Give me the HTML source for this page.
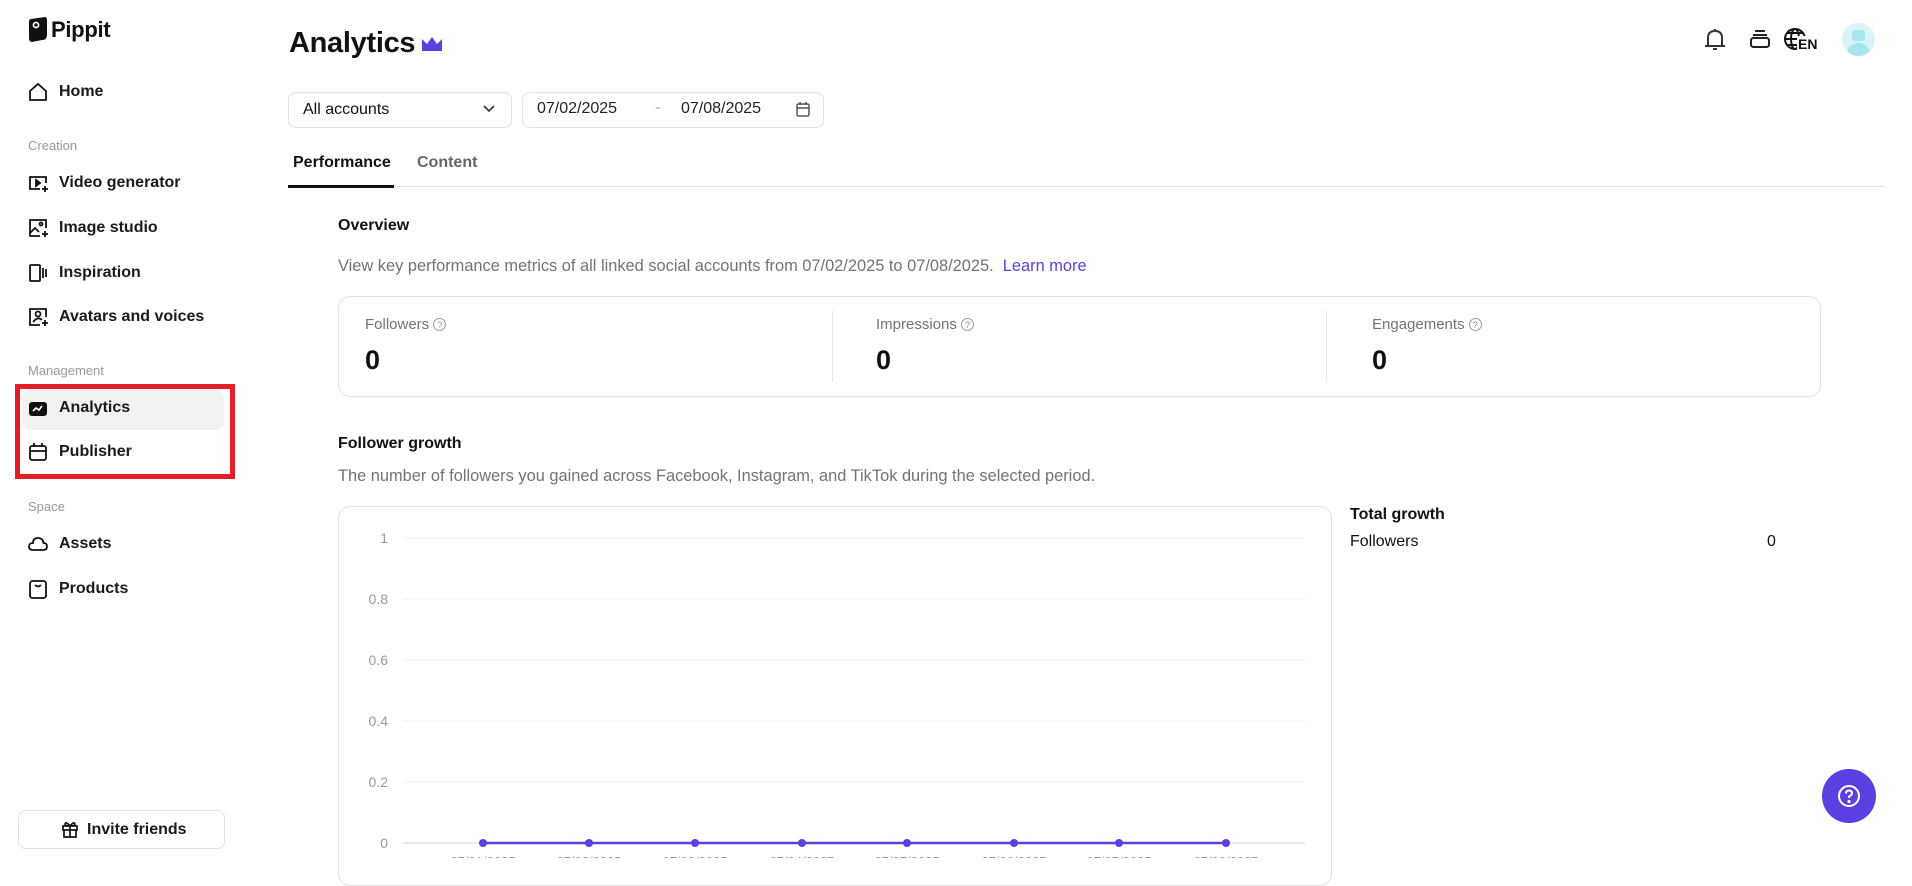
<!DOCTYPE html>
<html><head><meta charset="utf-8">
<style>
*{margin:0;padding:0;box-sizing:border-box}
body{width:1912px;height:858px;overflow:hidden;background:#fff;font-family:"Liberation Sans",Arial,sans-serif;color:#111;position:relative}
.a{position:absolute;white-space:nowrap}
.nav{font-size:16px;font-weight:bold;color:#1a1a1a}
.sec{font-size:13px;color:#999}
.ic{position:absolute;width:22px;height:22px}
.gray{color:#737373}
.q{border:1px solid #999;border-radius:50%;display:inline-block;width:13px;height:13px;line-height:12px;text-align:center;font-size:9px;color:#888;vertical-align:1px}
</style></head><body>
<!-- logo -->
<svg class="a" style="left:28px;top:17px" width="20" height="25" viewBox="0 0 20 25"><path d="M3 2 L17 0 Q19 0 19 3 L19 18 Q19 23 14 23 L4 25 Q1 25 1 21 L1 5 Q1 2 3 2Z" fill="#111"/><circle cx="8" cy="8" r="2.6" fill="none" stroke="#fff" stroke-width="1.6"/></svg>
<div class="a" style="left:51px;top:17px;font-size:22px;font-weight:bold;letter-spacing:-0.3px">Pippit</div>

<!-- nav -->
<svg class="ic" style="left:27px;top:81px" viewBox="0 0 22 22" fill="none" stroke="#111" stroke-width="1.8"><path d="M3 10 L11 3 L19 10 V19 H3Z"/></svg>
<div class="a nav" style="left:59px;top:83px">Home</div>
<div class="a sec" style="left:28px;top:138px">Creation</div>
<svg class="ic" style="left:27px;top:172px" viewBox="0 0 22 22" fill="none" stroke="#111" stroke-width="1.8"><path d="M19 11 V5 H3 V17 H13"/><path d="M9 8 L13 11 L9 14Z" fill="#111"/><path d="M18 14 V20 M15 17 H21"/></svg>
<div class="a nav" style="left:59px;top:174px">Video generator</div>
<svg class="ic" style="left:27px;top:217px" viewBox="0 0 22 22" fill="none" stroke="#111" stroke-width="1.8"><path d="M19 11 V3 H3 V19 H13"/><path d="M3 16 L8 11 L12 15"/><circle cx="14" cy="7" r="1.5"/><path d="M18 14 V20 M15 17 H21"/></svg>
<div class="a nav" style="left:59px;top:219px">Image studio</div>
<svg class="ic" style="left:27px;top:262px" viewBox="0 0 22 22" fill="none" stroke="#111" stroke-width="1.8"><rect x="3" y="3" width="10" height="16" rx="1"/><path d="M16 6 V16 M19 7 V15"/></svg>
<div class="a nav" style="left:59px;top:264px">Inspiration</div>
<svg class="ic" style="left:27px;top:306px" viewBox="0 0 22 22" fill="none" stroke="#111" stroke-width="1.8"><path d="M19 11 V3 H3 V19 H13"/><circle cx="11" cy="8" r="2.5"/><path d="M6 16 Q11 10 15 14"/><path d="M18 14 V20 M15 17 H21"/></svg>
<div class="a nav" style="left:59px;top:308px">Avatars and voices</div>
<div class="a sec" style="left:28px;top:363px">Management</div>
<div class="a" style="left:22px;top:390px;width:202px;height:40px;background:#f2f2f2;border-radius:8px"></div>
<svg class="ic" style="left:27px;top:398px" viewBox="0 0 22 22"><rect x="2" y="4" width="18" height="14" rx="3" fill="#111"/><path d="M6 13 L9 10 L12 12 L15 8" fill="none" stroke="#fff" stroke-width="1.6"/></svg>
<div class="a nav" style="left:59px;top:399px">Analytics</div>
<svg class="ic" style="left:27px;top:441px" viewBox="0 0 22 22" fill="none" stroke="#111" stroke-width="1.8"><rect x="3" y="5" width="16" height="14" rx="2"/><path d="M3 10 H19 M7 2 V6 M15 2 V6"/></svg>
<div class="a nav" style="left:59px;top:443px">Publisher</div>
<div class="a" style="left:15px;top:384px;width:220px;height:95px;border:5px solid #e41e26"></div>
<div class="a sec" style="left:28px;top:499px">Space</div>
<svg class="ic" style="left:27px;top:533px" viewBox="0 0 22 22" fill="none" stroke="#111" stroke-width="1.8"><path d="M6 17 H16 Q20 17 20 13.5 Q20 10 16.5 10 Q16 5 11 5 Q6 5 6 10 Q2 10 2 13.5 Q2 17 6 17Z"/></svg>
<div class="a nav" style="left:59px;top:535px">Assets</div>
<svg class="ic" style="left:27px;top:578px" viewBox="0 0 22 22" fill="none" stroke="#111" stroke-width="1.8"><rect x="3" y="3" width="16" height="17" rx="2.5"/><path d="M8 7 Q11 10 14 7"/></svg>
<div class="a nav" style="left:59px;top:580px">Products</div>
<div class="a" style="left:18px;top:810px;width:207px;height:39px;border:1px solid #e2e2e2;border-radius:8px"></div>
<svg class="a" style="left:61px;top:820px" width="18" height="19" viewBox="0 0 18 19" fill="none" stroke="#111" stroke-width="1.7"><rect x="2" y="6" width="14" height="4"/><path d="M3 10 V17 H15 V10 M9 6 V17 M9 6 Q5 1 4 4 Q4 6 9 6 Q14 6 14 4 Q13 1 9 6"/></svg>
<div class="a nav" style="left:87px;top:821px;font-size:16px">Invite friends</div>

<!-- header -->
<div class="a" style="left:289px;top:27px;font-size:29px;font-weight:bold;letter-spacing:-0.3px">Analytics</div>
<svg class="a" style="left:421px;top:36px" width="22" height="16" viewBox="0 0 22 16"><path d="M1 3 L6 8 L11 1 L16 8 L21 3 V15 H1Z" fill="#5b3fe0"/></svg>

<svg class="a" style="left:1703px;top:27px" width="24" height="26" viewBox="0 0 24 26" fill="none" stroke="#333" stroke-width="2"><path d="M5 19 V11 Q5 4 12 4 Q19 4 19 11 V19 M2 19 H22 M10 22 H14 M11 3 H13"/></svg>
<svg class="a" style="left:1749px;top:28px" width="22" height="22" viewBox="0 0 22 22" fill="none" stroke="#222" stroke-width="2"><path d="M6 3 H16 M4 7 H18"/><rect x="2" y="10" width="18" height="9" rx="2.5"/></svg>
<svg class="a" style="left:1783px;top:27px" width="36" height="27" viewBox="0 0 36 27" fill="none" stroke="#111" stroke-width="2"><circle cx="12" cy="12" r="10"/><ellipse cx="12" cy="12" rx="4" ry="10"/><path d="M2 12 H22 M4 6 H20 M4 18 H14"/></svg>
<div class="a" style="left:1797px;top:36px;font-size:14px;font-weight:bold;background:#fff;padding-left:1px;line-height:16px">EN</div>
<svg class="a" style="left:1842px;top:23px" width="33" height="33" viewBox="0 0 33 33"><circle cx="16.5" cy="16.5" r="16.5" fill="#d9f3f7"/><rect x="10" y="7" width="13" height="11" rx="3" fill="#a6e6f0"/><path d="M5 28 Q9 20 16.5 20 Q24 20 28 28 Q23 33 16.5 33 Q10 33 5 28Z" fill="#a6e6f0"/></svg>

<!-- filters -->
<div class="a" style="left:288px;top:92px;width:224px;height:36px;border:1px solid #e3e3e3;border-radius:8px"></div>
<div class="a" style="left:303px;top:101px;font-size:16px">All accounts</div>
<svg class="a" style="left:482px;top:104px" width="14" height="10" viewBox="0 0 14 10" fill="none" stroke="#333" stroke-width="1.6"><path d="M2 2 L7 7 L12 2"/></svg>
<div class="a" style="left:522px;top:92px;width:302px;height:36px;border:1px solid #e3e3e3;border-radius:8px"></div>
<div class="a" style="left:537px;top:100px;font-size:16px;color:#222">07/02/2025</div>
<div class="a" style="left:655px;top:99px;font-size:16px;color:#aaa">-</div>
<div class="a" style="left:681px;top:100px;font-size:16px;color:#222">07/08/2025</div>
<svg class="a" style="left:795px;top:101px" width="16" height="17" viewBox="0 0 16 17" fill="none" stroke="#555" stroke-width="1.5"><rect x="2" y="3" width="12" height="12" rx="1.5"/><path d="M2 7 H14 M5 1 V4 M11 1 V4"/></svg>

<!-- tabs -->
<div class="a" style="left:293px;top:154px;font-size:16px;font-weight:bold">Performance</div>
<div class="a" style="left:417px;top:154px;font-size:16px;font-weight:bold;color:#666">Content</div>
<div class="a" style="left:288px;top:186px;width:1597px;height:1px;background:#e3e3e3"></div>
<div class="a" style="left:288px;top:185px;width:106px;height:3px;background:#111"></div>

<!-- overview -->
<div class="a" style="left:338px;top:217px;font-size:16px;font-weight:bold">Overview</div>
<div class="a gray" style="left:338px;top:257px;font-size:16.4px">View key performance metrics of all linked social accounts from 07/02/2025 to 07/08/2025. &nbsp;<span style="color:#5b3fe0">Learn more</span></div>
<div class="a" style="left:338px;top:296px;width:1483px;height:101px;border:1px solid #e3e3e3;border-radius:12px"></div>
<div class="a" style="left:832px;top:311px;width:1px;height:71px;background:#e8e8e8"></div>
<div class="a" style="left:1326px;top:311px;width:1px;height:71px;background:#e8e8e8"></div>
<div class="a gray" style="left:365px;top:316px;font-size:15px">Followers <span class="q">?</span></div>
<div class="a gray" style="left:876px;top:316px;font-size:15px">Impressions <span class="q">?</span></div>
<div class="a gray" style="left:1372px;top:316px;font-size:15px">Engagements <span class="q">?</span></div>
<div class="a" style="left:365px;top:345px;font-size:27px;font-weight:bold">0</div>
<div class="a" style="left:876px;top:345px;font-size:27px;font-weight:bold">0</div>
<div class="a" style="left:1372px;top:345px;font-size:27px;font-weight:bold">0</div>

<!-- follower growth -->
<div class="a" style="left:338px;top:435px;font-size:16px;font-weight:bold">Follower growth</div>
<div class="a gray" style="left:338px;top:467px;font-size:16.4px">The number of followers you gained across Facebook, Instagram, and TikTok during the selected period.</div>
<div class="a" style="left:338px;top:506px;width:994px;height:380px;border:1px solid #e3e3e3;border-radius:12px"></div>
<svg class="a" style="left:338px;top:506px" width="998" height="352" viewBox="0 0 998 352" font-family="Liberation Sans,sans-serif" font-size="14" fill="#999">
<g stroke="#f0f0f0" stroke-width="1">
<line x1="65" y1="32" x2="967" y2="32"/><line x1="65" y1="93" x2="967" y2="93"/><line x1="65" y1="154" x2="967" y2="154"/><line x1="65" y1="215" x2="967" y2="215"/><line x1="65" y1="276" x2="967" y2="276"/></g>
<line x1="65" y1="337" x2="967" y2="337" stroke="#dde2ea" stroke-width="1.5"/>
<g text-anchor="end"><text x="50" y="37">1</text><text x="50" y="98">0.8</text><text x="50" y="159">0.6</text><text x="50" y="220">0.4</text><text x="50" y="281">0.2</text><text x="50" y="342">0</text></g>
<line x1="145" y1="337" x2="888" y2="337" stroke="#5b3fe0" stroke-width="2.5"/>
<g fill="#5b3fe0"><circle cx="145" cy="337" r="4"/><circle cx="251" cy="337" r="4"/><circle cx="357" cy="337" r="4"/><circle cx="464" cy="337" r="4"/><circle cx="569" cy="337" r="4"/><circle cx="676" cy="337" r="4"/><circle cx="781" cy="337" r="4"/><circle cx="888" cy="337" r="4"/></g>
<g text-anchor="middle" font-size="13"><text x="145" y="360">07/01/2025</text><text x="251" y="360">07/02/2025</text><text x="357" y="360">07/03/2025</text><text x="464" y="360">07/04/2025</text><text x="569" y="360">07/05/2025</text><text x="676" y="360">07/06/2025</text><text x="781" y="360">07/07/2025</text><text x="888" y="360">07/08/2025</text></g>
</svg>
<div class="a" style="left:1350px;top:506px;font-size:16px;font-weight:bold">Total growth</div>
<div class="a" style="left:1350px;top:533px;font-size:16px">Followers</div>
<div class="a" style="left:1767px;top:533px;font-size:16px">0</div>

<!-- help -->
<div class="a" style="left:1822px;top:769px;width:54px;height:54px;border-radius:50%;background:#5b3fe0"></div>
<svg class="a" style="left:1837px;top:784px" width="24" height="24" viewBox="0 0 24 24" fill="none" stroke="#fff" stroke-width="2"><circle cx="12" cy="12" r="10"/><path d="M9 9.5 Q9 6.5 12 6.5 Q15 6.5 15 9.3 Q15 11 12 12.5 V14"/><circle cx="12" cy="17.5" r="0.6" fill="#fff"/></svg>
</body></html>
